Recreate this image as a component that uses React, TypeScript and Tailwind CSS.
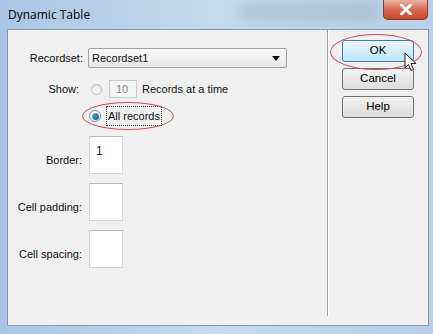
import React from "react";

const font = { fontFamily: '"Liberation Sans", Arial, sans-serif' };

function Box({ children }: { children?: React.ReactNode }) {
  return (
    <div className="w-[34px] h-[38px] bg-white border border-[#d5d5d5] border-t-[#bcbcbc] text-[12px] text-[#1a1a1a] pl-[6px] pt-[5px]">
      {children}
    </div>
  );
}

function Btn({ label, active }: { label: string; active?: boolean }) {
  return (
    <div
      className={
        "w-[72px] h-[22px] rounded-[3px] border flex items-center justify-center text-[11.5px] text-black " +
        (active
          ? "border-[#3c7fb1] bg-gradient-to-b from-[#eaf6fd] to-[#bee6fd]"
          : "border-[#707070] bg-gradient-to-b from-[#f2f2f2] to-[#dcdcdc]")
      }
    >
      {label}
    </div>
  );
}

function BoxRow({ label, value }: { label: string; value?: string }) {
  return (
    <div className="flex items-end">
      <div className="w-[78px] text-right pr-[4px] pb-[6px]">{label}</div>
      <div className="ml-[3px]"><Box>{value}</Box></div>
    </div>
  );
}

export default function App() {
  return (
    <div className="w-[433px] h-[334px] overflow-hidden relative bg-gradient-to-r from-[#a9c6e6] via-[#c6dbef] to-[#b7cfe8] flex flex-col" style={font}>
      {/* title bar */}
      <div className="h-[29px] flex items-start relative">
        <div className="pl-[8px] pt-[6px] text-[12px] text-black" style={{ fontFamily: '"Open Sans", "Liberation Sans", sans-serif' }}>Dynamic Table</div>
        <div className="absolute left-[240px] top-[2px] w-[140px] h-[20px] bg-[#9fb3c8] opacity-50 blur-[6px]" />
        <div className="absolute left-[383px] top-0 w-[45px] h-[20px] rounded-b-[5px] border border-[#8a3a2c] border-t-0 bg-gradient-to-b from-[#eab3a2] via-[#d86a52] to-[#c9452c] flex items-center justify-center">
          <svg width="12" height="11" viewBox="0 0 12 11">
            <path d="M1.5 1 L10.5 10 M10.5 1 L1.5 10" stroke="#ffffff" strokeWidth="2.8" strokeLinecap="square" />
          </svg>
        </div>
      </div>
      {/* client area */}
      <div className="ml-[7px] mr-[4px] h-[297px] border border-[#8a96a4] bg-[#f0f0f0] flex text-[11px] text-[#111]">
        {/* left panel */}
        <div className="w-[319px] pt-[18px] flex flex-col">
          <div className="flex items-center h-[20px]">
            <div className="w-[78px] text-right pr-[3px]">Recordset:</div>
            <div className="w-[199px] h-[20px] ml-[2px] rounded-[2px] border border-[#a0a0a0] bg-gradient-to-b from-[#fbfbfb] to-[#e6e6e6] flex items-center justify-between pl-[3px] pr-[6px]">
              <span>Recordset1</span>
              <svg width="8" height="5" viewBox="0 0 8 5"><path d="M0 0 H8 L4 5 Z" fill="#111" /></svg>
            </div>
          </div>
          <div className="flex items-center h-[18px] mt-[12px]">
            <div className="w-[74px] text-right pr-[3px]">Show:</div>
            <div className="w-[11px] h-[11px] rounded-full border border-[#bdbdbd] bg-gradient-to-b from-[#e8e8e8] to-[#fafafa] ml-[9px]" />
            <div className="w-[28px] h-[18px] border border-[#c8c8c8] ml-[7px] bg-[#f4f4f4] text-[#8a8a8a] pl-[6px] leading-[16px]">10</div>
            <div className="ml-[5px]">Records at a time</div>
          </div>
          <div className="flex items-center h-[20px] mt-[8px] relative">
            <div className="w-[12px] h-[12px] rounded-full border border-[#6f8fb0] bg-white flex items-center justify-center ml-[81px]">
              <div className="w-[7px] h-[7px] rounded-full bg-gradient-to-br from-[#6ab2e8] to-[#14507f]" />
            </div>
            <div className="ml-[5px] border border-dotted border-[#333] px-[1px] h-[20px] leading-[18px]">All records</div>
            <div className="absolute left-[74px] top-[-4px] w-[92px] h-[28px] rounded-[50%] border border-[#c8505f]" />
          </div>
          <div className="flex flex-col gap-[9px] mt-[10px]">
            <BoxRow label="Border:" value="1" />
            <BoxRow label="Cell padding:" />
            <BoxRow label="Cell spacing:" />
          </div>
        </div>
        {/* separator */}
        <div className="h-[286px] flex">
          <div className="w-[1px] bg-[#a0a0a0]" />
          <div className="w-[1px] bg-white" />
        </div>
        {/* right panel */}
        <div className="flex-1 pl-[13px] pt-[10px] flex flex-col gap-[6px] relative">
          <Btn label="OK" active />
          <Btn label="Cancel" />
          <Btn label="Help" />
          <div className="absolute left-[1px] top-[4px] w-[92px] h-[36px] rounded-[50%] border border-[#c8505f]" />
          <svg className="absolute left-[75px] top-[22px]" width="14" height="21" viewBox="0 0 14 21">
            <path d="M1 1 L1 16 L4.5 12.5 L7 18.5 L9.5 17.5 L7 11.5 L12 11.5 Z" fill="#ffffff" stroke="#222" strokeWidth="1" strokeLinejoin="miter" />
          </svg>
        </div>
      </div>
    </div>
  );
}
